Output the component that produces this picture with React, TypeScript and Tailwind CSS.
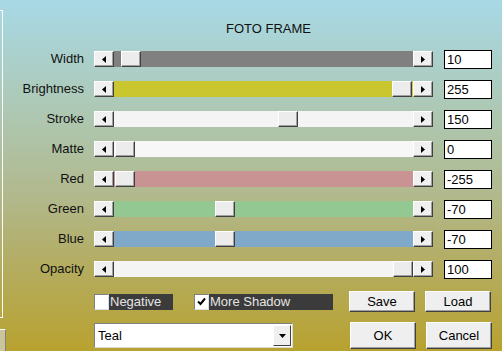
import React from 'react';

const rows = [
  { label: 'Width', track: 'bg-[#808080]', pos: 7, value: '10' },
  { label: 'Brightness', track: 'bg-[#c9c62f]', pos: 278, value: '255' },
  { label: 'Stroke', track: 'bg-[#f4f4f4]', pos: 164, value: '150' },
  { label: 'Matte', track: 'bg-[#f7f7f7]', pos: 1, value: '0' },
  { label: 'Red', track: 'bg-[#c99394]', pos: 1, value: '-255' },
  { label: 'Green', track: 'bg-[#93c893]', pos: 101, value: '-70' },
  { label: 'Blue', track: 'bg-[#80a8c9]', pos: 101, value: '-70' },
  { label: 'Opacity', track: 'bg-[#f4f4f4]', pos: 279, value: '100' },
];

function ArrowBtn({ dir }: { dir: 'left' | 'right' }) {
  return (
    <div className="w-[20px] h-[16px] shrink-0 bg-[#f0f0f0] border border-t-white border-l-white border-r-[#404040] border-b-[#404040] shadow-[inset_-1px_-1px_0_#a0a0a0] flex items-center justify-center">
      <svg width="4" height="7" viewBox="0 0 4 7">
        <polygon points={dir === 'left' ? '4,0 4,7 0,3.5' : '0,0 0,7 4,3.5'} fill="#000" />
      </svg>
    </div>
  );
}

function Thumb({ pos }: { pos: number }) {
  return (
    <div
      className="w-[20px] h-[16px] shrink-0 bg-[#ececec] border border-t-white border-l-white border-r-[#404040] border-b-[#404040] shadow-[inset_-1px_-1px_0_#a0a0a0]"
      style={{ marginLeft: pos }}
    />
  );
}

function Bevel({ children, className }: { children: React.ReactNode; className: string }) {
  return (
    <div
      className={
        'bg-[#efefef] border border-t-white border-l-white border-r-[#404040] border-b-[#404040] shadow-[inset_-1px_-1px_0_#a0a0a0] flex items-center justify-center text-[13px] text-black ' +
        className
      }
    >
      {children}
    </div>
  );
}

function Check({ checked, label, labelWidth }: { checked: boolean; label: string; labelWidth: string }) {
  return (
    <div className="flex items-center h-[16px]">
      <div className="w-[15px] h-[16px] bg-white border border-t-[#808080] border-l-[#808080] border-r-[#e0e0e0] border-b-[#e0e0e0] flex items-center justify-center">
        {checked && (
          <svg width="9" height="9" viewBox="0 0 9 9">
            <path d="M1 4.5 L3.5 7 L8 1.5" stroke="#000" strokeWidth="2" fill="none" />
          </svg>
        )}
      </div>
      <div className={'h-[16px] bg-[#3b3b3b] text-[#e4e4e4] text-[13px] leading-[16px] pl-[1px] ' + labelWidth}>
        {label}
      </div>
    </div>
  );
}

export default function App() {
  return (
    <div
      className="w-[502px] h-[351px] overflow-hidden flex bg-[linear-gradient(180deg,#a8d9e6_0%,#aec6ae_35%,#b1b98e_55%,#b4ab5c_78%,#b8a22f_100%)] text-[#111]"
      style={{ fontFamily: '"Liberation Sans", Arial, sans-serif' }}
    >
      <div className="w-[6px] shrink-0 flex flex-col">
        <div className="mt-[10px] h-[310px] w-[3px] border-t border-r border-b border-white" />
        <div className="mt-[11px] h-[22px] w-[6px] border-t border-white border-r border-r-[#808080] bg-[#c9c49a]" />
      </div>

      <div className="flex flex-col">
        <div className="h-[44px] pt-[21px] text-[13px] leading-[16px] pl-[220px]">
          FOTO FRAME
        </div>

        {rows.map((r) => (
          <div key={r.label} className="h-[30px] flex items-center">
            <div className="w-[78px] text-right text-[13px] leading-[16px]">{r.label}</div>
            <div className="ml-[10px] w-[339px] h-[16px] flex">
              <ArrowBtn dir="left" />
              <div className={'flex-1 flex ' + r.track}>
                <Thumb pos={r.pos} />
              </div>
              <ArrowBtn dir="right" />
            </div>
            <div className="ml-[11px] w-[48px] h-[19px] bg-white border border-black text-[13px] leading-[17px] pl-[2px] text-black">
              {r.value}
            </div>
          </div>
        ))}

        <div className="mt-[7px] h-[21px] flex items-center">
          <div className="ml-[88px]">
            <Check checked={false} label="Negative" labelWidth="w-[64px]" />
          </div>
          <div className="ml-[21px]">
            <Check checked={true} label="More Shadow" labelWidth="w-[124px]" />
          </div>
          <Bevel className="ml-[16px] w-[66px] h-[21px]">Save</Bevel>
          <Bevel className="ml-[10px] w-[66px] h-[21px]">Load</Bevel>
        </div>

        <div className="mt-[10px] h-[27px] flex items-center">
          <div className="ml-[88px] w-[199px] h-[25px] bg-white border border-t-[#808080] border-l-[#808080] border-r-[#d8d8d8] border-b-[#d8d8d8] flex items-center">
            <div className="flex-1 pl-[3px] text-[13px] text-black">Teal</div>
            <div className="w-[18px] h-[21px] mr-[1px] bg-[#efefef] border border-t-white border-l-white border-r-[#404040] border-b-[#404040] flex items-center justify-center">
              <svg width="7" height="4" viewBox="0 0 7 4">
                <polygon points="0,0 7,0 3.5,4" fill="#000" />
              </svg>
            </div>
          </div>
          <Bevel className="ml-[57px] w-[66px] h-[27px]">OK</Bevel>
          <Bevel className="ml-[10px] w-[66px] h-[27px]">Cancel</Bevel>
        </div>
      </div>
    </div>
  );
}
